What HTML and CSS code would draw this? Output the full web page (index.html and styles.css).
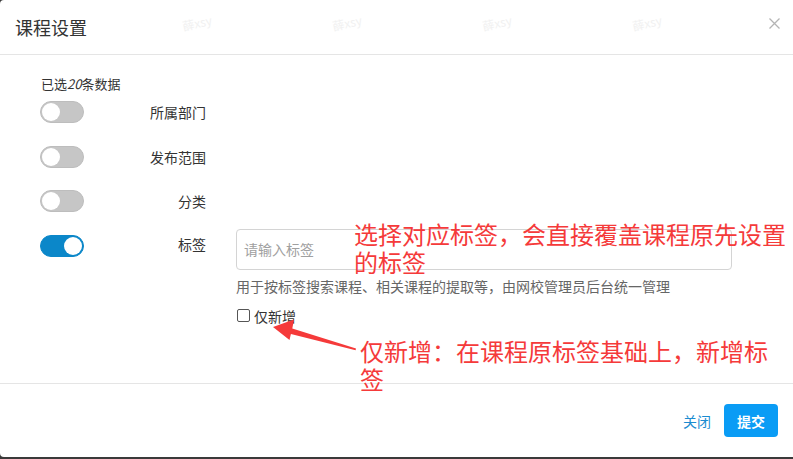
FILE: index.html
```html
<!DOCTYPE html>
<html lang="zh-CN">
  <head>
    <meta charset="UTF-8" />
    <meta name="viewport" content="width=device-width, initial-scale=1.0" />
    <title>课程设置</title>
    <link rel="stylesheet" href="styles.css">
  </head>
  <body>
    <div class="modal">
      <!-- Header -->
      <div class="modal-header">
        <h3 class="modal-title">课程设置</h3>
        <span class="mark" style="left:182px">薛xsy</span>
        <span class="mark" style="left:332px">薛xsy</span>
        <span class="mark" style="left:482px">薛xsy</span>
        <span class="mark" style="left:632px">薛xsy</span>
        <svg class="close" width="11" height="11" viewBox="0 0 11 11">
          <path d="M0.5 0.5 L10.5 10.5 M10.5 0.5 L0.5 10.5" stroke="#b4b4b4" stroke-width="1.3" fill="none" />
        </svg>
      </div>

      <!-- Body -->
      <div class="modal-body">
        <div class="count">已选<i>20</i>条数据</div>

        <div class="row">
          <span class="switch"></span>
          <span class="label">所属部门</span>
        </div>
        <div class="row">
          <span class="switch"></span>
          <span class="label">发布范围</span>
        </div>
        <div class="row">
          <span class="switch"></span>
          <span class="label">分类</span>
        </div>
        <div class="row tag-row">
          <span class="switch on"></span>
          <span class="label">标签</span>
          <div class="field">
            <div class="input">请输入标签</div>
            <p class="help">用于按标签搜索课程、相关课程的提取等，由网校管理员后台统一管理</p>
            <label class="check"><span class="box"></span>仅新增</label>
          </div>
        </div>

        <!-- Annotations drawn over the form -->
        <div class="note note-top">选择对应标签，会直接覆盖课程原先设置的标签</div>
        <div class="note note-bottom">仅新增：在课程原标签基础上，新增标签</div>
        <svg class="arrow" width="100" height="50" viewBox="270 310 100 50">
          <polygon fill="#f53a3a" points="273,325 294,317.5 292.3,326.6 356,346.5 355.6,348.2 290.9,331.9 289.5,338" />
        </svg>
      </div>

      <!-- Footer -->
      <div class="modal-footer">
        <a class="btn-link">关闭</a>
        <button class="btn-primary">提交</button>
      </div>
    </div>
  </body>
</html>
```

FILE: styles.css
```css
/* Page behind the dialog */
body {
  margin: 0;
  background-color: #3a3a3a;
  font-family: "Noto Sans CJK SC", "Noto Sans", sans-serif;
  color: #333;
  overflow: hidden;
}

/* Dialog box */
.modal {
  width: 793px;
  height: 457px;
  background-color: #fff;
  border-radius: 4px 0 0 4px;
  display: flex;
  flex-direction: column;
}

/* Header */
.modal-header {
  position: relative;
  height: 54px;
  border-bottom: 1px solid #e5e5e5;
  display: flex;
  align-items: center;
  padding-left: 15px;
}

.modal-title {
  margin: 0;
  font-size: 18px;
  font-weight: normal;
  color: #333;
}

.close {
  position: absolute;
  right: 13px;
  top: 18px;
}

/* Faint watermark stamps */
.mark {
  position: absolute;
  top: 14px;
  font-size: 12px;
  color: #f1f1f1;
  transform: rotate(-12deg);
}

/* Body */
.modal-body {
  position: relative;
  flex: 1;
  padding: 20px 0 0 40px;
}

.count {
  font-size: 13px;
  line-height: 18px;
  margin-bottom: 8px;
  padding-left: 1px;
}

.row {
  display: flex;
  align-items: center;
  height: 22px;
  margin-bottom: 22.5px;
}

.label {
  width: 122px;
  text-align: right;
  font-size: 14px;
  line-height: 22px;
}

/* Toggle switch */
.switch {
  position: relative;
  width: 44px;
  height: 22px;
  border-radius: 11px;
  background-color: #c6c6c6;
  box-sizing: border-box;
  border: 1px solid #bdbdbd;
}

.switch::after {
  content: "";
  position: absolute;
  top: 1px;
  left: 1px;
  width: 18px;
  height: 18px;
  border-radius: 50%;
  background-color: #fff;
}

.switch.on {
  background-color: #0b87c9;
  border-color: #0b87c9;
}

.switch.on::after {
  left: auto;
  right: 1px;
}

/* Tag row with input */
.tag-row {
  align-items: flex-start;
  height: auto;
  margin-top: -6px;
}

.tag-row .switch {
  margin-top: 6px;
}

.tag-row .label {
  margin-top: 4px;
}

.field {
  margin-left: 30px;
  width: 496px;
}

.input {
  height: 41px;
  box-sizing: border-box;
  border: 1px solid #d4d4d4;
  border-radius: 4px;
  padding-left: 7px;
  font-size: 14px;
  line-height: 39px;
  color: #a0a0a0;
}

.help {
  margin: 7px 0 0;
  font-size: 14px;
  line-height: 18px;
  color: #666;
  white-space: nowrap;
}

.check {
  display: flex;
  align-items: center;
  margin-top: 12px;
  font-size: 14px;
  line-height: 18px;
  color: #333;
}

.box {
  width: 11px;
  height: 11px;
  border: 1px solid #555;
  border-radius: 2px;
  margin: 0 4px 0 1px;
}

/* Red annotations */
.note {
  position: absolute;
  font-size: 24px;
  line-height: 28px;
  color: #f53a3a;
}

.note-top {
  left: 354px;
  top: 165px;
  width: 436px;
}

.note-bottom {
  left: 360px;
  top: 282px;
  width: 412px;
}

.arrow {
  position: absolute;
  left: 270px;
  top: 257px;
}

/* Footer */
.modal-footer {
  height: 73px;
  border-top: 1px solid #e5e5e5;
  display: flex;
  align-items: center;
  justify-content: flex-end;
  padding-right: 15px;
  gap: 13px;
}

.btn-link {
  font-size: 14px;
  color: #1a8bd0;
  cursor: pointer;
}

.btn-primary {
  width: 54px;
  height: 33px;
  border: none;
  border-radius: 4px;
  background-color: #0a9cf5;
  color: #fff;
  font-family: inherit;
  font-size: 14px;
  font-weight: bold;
  cursor: pointer;
}
```
